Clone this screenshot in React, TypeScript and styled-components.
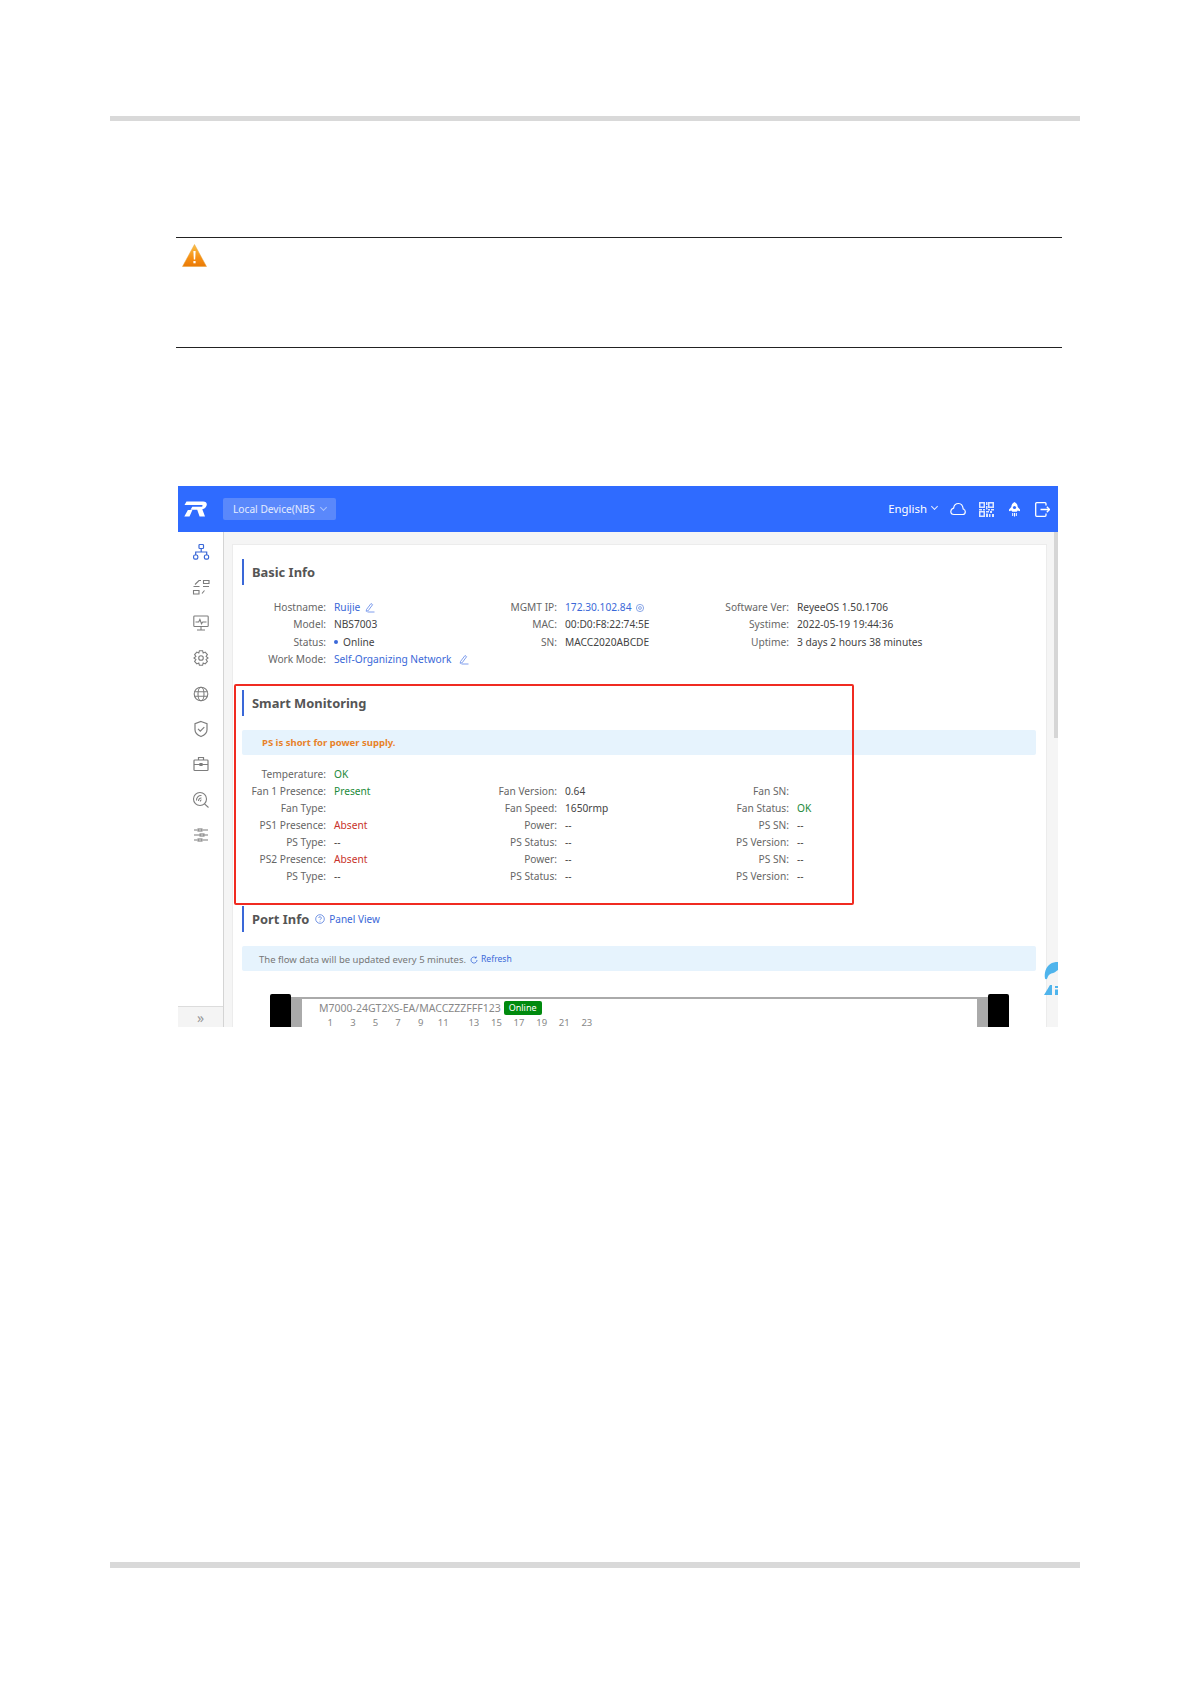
import React from 'react';
import styled, { createGlobalStyle } from 'styled-components';

const GlobalStyle = createGlobalStyle`
  html, body {
    margin: 0;
    padding: 0;
    background: #fff;
  }
  body {
    font-family: "Noto Sans", "Open Sans", Arial, sans-serif;
  }
`;

type Row = {
  label: string;
  value?: React.ReactNode;
};

const NetworkIcon = () => (
  <svg width="18" height="18" viewBox="0 0 18 18" fill="none" stroke="currentColor" strokeWidth="1.2">
    <rect x="7" y="1.5" width="4.5" height="4" rx="0.8" />
    <rect x="1.6" y="12" width="4.2" height="4.2" rx="1.4" />
    <rect x="12.4" y="12" width="4.2" height="4.2" rx="1.4" />
    <path d="M9.2 5.5v3.4M3.7 12V9h11v3" />
  </svg>
);

const FlowIcon = () => (
  <svg width="18" height="18" viewBox="0 0 18 18" fill="none" stroke="currentColor" strokeWidth="1.1">
    <path d="M11.5 2.5h5.500v3h-5.500zM1.500 8.500h6M1.500 12.500h5.500v3.500h-5.500zM11 8.500h6M10 15.500l2.500-3M3 6.500l4-4h2" />
  </svg>
);

const MonitorIcon = () => (
  <svg width="18" height="18" viewBox="0 0 18 18" fill="none" stroke="currentColor" strokeWidth="1.1">
    <rect x="1.8" y="2" width="14.4" height="10.5" rx="0.8" />
    <path d="M3.5 8h3.200l1.200-2.600 1.600 4.400 1.200-1.800h3.800M9 12.500v3M5 16h8" />
  </svg>
);

const GearIcon = () => (
  <svg width="18" height="18" viewBox="0 0 18 18" fill="none" stroke="currentColor" strokeWidth="1.1">
    <path d="M7.400 1.800h3.200l.6 2.200 2-.9 2.200 2.500-1.300 1.900 1.900 1.500-1.900 1.500 1.300 1.900-2.200 2.500-2-.9-.6 2.200H7.400l-.6-2.200-2 .9-2.200-2.500 1.300-1.900L2 9l1.900-1.500-1.300-1.900 2.200-2.500 2 .9z" />
    <circle cx="9" cy="9" r="2.3" />
  </svg>
);

const GlobeIcon = () => (
  <svg width="18" height="18" viewBox="0 0 18 18" fill="none" stroke="currentColor" strokeWidth="1.1">
    <circle cx="9" cy="9" r="6.8" />
    <ellipse cx="9" cy="9" rx="3" ry="6.8" />
    <path d="M2.600 6.700h12.800M2.600 11.300h12.800" />
  </svg>
);

const ShieldIcon = () => (
  <svg width="18" height="18" viewBox="0 0 18 18" fill="none" stroke="currentColor" strokeWidth="1.2">
    <path d="M9 1.500l6 2.200v6c0 3.200-3 5.600-6 6.800-3-1.200-6-3.600-6-6.800v-6z" />
    <path d="M6 8.800l2.300 2.300 4-4" />
  </svg>
);

const CaseIcon = () => (
  <svg width="18" height="18" viewBox="0 0 18 18" fill="none" stroke="currentColor" strokeWidth="1.2">
    <rect x="2" y="5" width="14" height="10.5" rx="0.8" />
    <path d="M6.500 5V2.500h5V5M2 9.500h14" />
    <path d="M8 8.500h2v2H8z" fill="currentColor" />
  </svg>
);

const RadarIcon = () => (
  <svg width="18" height="18" viewBox="0 0 18 18" fill="none" stroke="currentColor" strokeWidth="1.1">
    <circle cx="8" cy="8" r="6.5" />
    <path d="M12.500 12.800l4 3.700M4.500 9.500a4.500 4.500 0 0 1 5-5M6.500 10a2.800 2.800 0 0 1 3-3M8.500 10.500a1 1 0 0 1 1-1.500" />
  </svg>
);

const SlidersIcon = () => (
  <svg width="18" height="18" viewBox="0 0 18 18" fill="none" stroke="currentColor" strokeWidth="1.1">
    <path d="M2 4h3M11 4h5M2 9h5.500M12.500 9H16M2 14h3M11 14h5" />
    <rect x="6" y="3" width="4" height="2" />
    <rect x="8" y="8" width="4" height="2" />
    <rect x="6" y="13" width="4" height="2" />
  </svg>
);

const PenIcon = () => (
  <svg width="11" height="11" viewBox="0 0 11 11" fill="none" stroke="#5f86e8" strokeWidth="0.8">
    <path d="M2.500 7.500L7 1.500l1.600 1.200-4.400 6-2 .6zM3.500 10h7" />
  </svg>
);

const WarningIcon = () => (
  <svg width="25" height="23" viewBox="0 0 25 23">
    <defs>
      <linearGradient id="warn" x1="0" y1="0" x2="0" y2="1">
        <stop offset="0" stopColor="#f9c24b" />
        <stop offset="0.6" stopColor="#f68f12" />
        <stop offset="1" stopColor="#ea7a06" />
      </linearGradient>
    </defs>
    <path d="M12.500 0.500L24.500 22.500H0.500z" fill="url(#warn)" stroke="#e8a33a" strokeWidth="0.5" />
    <path d="M11.400 7h2.200l-.4 8.500h-1.400z" fill="#fff" />
    <rect x="11.400" y="17" width="2.200" height="2.300" fill="#fff" />
  </svg>
);

const Logo = () => (
  <svg width="24" height="16" viewBox="0 0 24 16" fill="#fff">
    <path d="M3.500 0.500H20c3.200 0 4.300 1.800 3.600 4.100-.6 1.900-2.100 3.200-4.300 3.700l2.700 7.200h-5.400l-2.400-6.800H7.500l1.800-3h8.700c1 0 1.500-.4 1.600-1 .1-.5-.3-.8-1-.8H1.500zM4.900 9h4.500L6.500 15.500H1.300z" />
  </svg>
);

const CloudIcon = () => (
  <svg width="16" height="14" viewBox="0 0 16 14" fill="none" stroke="#fff" strokeWidth="1.2">
    <path d="M4 12.500h8.500c1.600 0 2.800-1.200 2.800-2.800 0-1.300-.9-2.400-2.100-2.700C12.800 3.500 11 1.500 8.500 1.500 5.800 1.500 4 3.500 3.600 6.100 2 6.600.8 7.800.8 9.500c0 1.700 1.400 3 3.200 3z" />
  </svg>
);

const QrIcon = () => (
  <svg width="15" height="15" viewBox="0 0 15 15" fill="#dfe8ff">
    <path d="M0 0h6v6H0zM1.500 1.500v3h3v-3zM9 0h6v6H9zM10.500 1.500v3h3v-3zM0 9h6v6H0zM1.500 10.500v3h3v-3zM7 0h1.500v3H7zM7 4h1.500v3.500H7zM0 7h3v1.500H0zM4 7h2v1.500H4zM9 7h2v1.500H9zM12 7h3v1.500h-3zM7 9h3v1.500H7zM11 9h2v2h-2zM7 11.500h2V15H7zM10 12h1.500v3H10zM13 12h2v3h-2z" />
  </svg>
);

const RocketIcon = () => (
  <svg width="13" height="15" viewBox="0 0 13 15" fill="#fff">
    <path d="M6.500 0C8.600 1 9.600 2.800 9.700 4.900l2.300 2.600v1.700l-2.400-.6c-.3.500-.6.900-1 1.200H4.400c-.4-.3-.7-.7-1-1.200L1 9.200V7.500l2.300-2.600C3.400 2.800 4.400 1 6.500 0z" />
    <circle cx="6.500" cy="5.500" r="1.600" fill="#2f6bff" />
    <path d="M4.200 11h1v3h-1zM6 11h1v3.500H6zM7.800 11h1v3h-1z" />
  </svg>
);

const LogoutIcon = () => (
  <svg width="15" height="15" viewBox="0 0 15 15" fill="none" stroke="#fff" strokeWidth="1.3">
    <path d="M11 3.500V1.700a1 1 0 0 0-1-1H1.700a1 1 0 0 0-1 1v11.600a1 1 0 0 0 1 1H10a1 1 0 0 0 1-1v-1.800M5.500 7.500h9M11.800 4.800l2.700 2.700-2.700 2.700" />
  </svg>
);

const Page = styled.div`
  width: 1191px;
  height: 1684px;
  overflow: hidden;
  padding: 116px 111px 0 110px;
  box-sizing: border-box;
  display: flex;
  flex-direction: column;
`;

const Rule = styled.div`
  flex: none;
  height: 5px;
  background: #d9d9d9;
`;

const FootRule = styled(Rule)`
  margin-top: 535px;
  height: 6px;
`;

const Notice = styled.div`
  flex: none;
  margin: 116px 18px 0 66px;
  height: 111px;
  box-sizing: border-box;
  border-top: 1px solid #222;
  border-bottom: 1px solid #222;
  padding: 6px 0 0 6px;
`;

const Shot = styled.div`
  flex: none;
  position: relative;
  margin: 138px 22px 0 68px;
  height: 541px;
  overflow: hidden;
  display: flex;
  flex-direction: column;
  font-size: 10.200px;
  line-height: 17px;
  color: #555;
`;

const TopBar = styled.div`
  flex: none;
  height: 46px;
  background: #2f6bff;
  display: flex;
  align-items: center;
  padding: 0 8px 0 5px;
  color: #fff;
`;

const DeviceSelect = styled.div`
  margin-left: 16px;
  width: 113px;
  height: 22px;
  box-sizing: border-box;
  padding-left: 10px;
  background: #5a88fb;
  border-radius: 2px;
  display: flex;
  align-items: center;
  gap: 4px;
  font-size: 10.200px;
  color: #e4ecff;
`;

const Caret = styled.span<{ $dim?: boolean }>`
  width: 4px;
  height: 4px;
  margin-top: -3px;
  margin-left: 2px;
  border-right: 1px solid ${(p) => (p.$dim ? '#a9c2fd' : '#dfe8ff')};
  border-bottom: 1px solid ${(p) => (p.$dim ? '#a9c2fd' : '#dfe8ff')};
  transform: rotate(45deg);
`;

const TopTools = styled.div`
  margin-left: auto;
  display: flex;
  align-items: center;
  color: #fff;
`;

const Lang = styled.div`
  display: flex;
  align-items: center;
  gap: 3px;
  font-size: 11.400px;
  margin-right: 13px;
  padding-bottom: 2px;
`;

const ToolIcon = styled.span`
  display: flex;
  width: 16px;
  justify-content: center;
  margin-left: 12px;
  &:first-of-type {
    margin-left: 0;
  }
`;

const Body = styled.div`
  flex: 1;
  min-height: 0;
  display: flex;
`;

const Sidebar = styled.div`
  flex: none;
  width: 46px;
  box-sizing: border-box;
  border-right: 1px solid #d4d4d4;
  display: flex;
  flex-direction: column;
  background: #fff;
`;

const NavList = styled.div`
  flex: 1;
  display: flex;
  flex-direction: column;
  align-items: center;
  gap: 17.400px;
  padding-top: 11px;
`;

const NavItem = styled.span<{ $active?: boolean }>`
  display: flex;
  color: ${(p) => (p.$active ? '#3a68d8' : '#7d7d7d')};
`;

const Collapse = styled.div`
  flex: none;
  height: 20px;
  background: #f4f4f4;
  border-top: 1px solid #dcdcdc;
  display: flex;
  align-items: center;
  justify-content: center;
  color: #999;
  font-size: 14px;
`;

const Main = styled.div`
  flex: 1;
  min-width: 0;
  background: #f5f5f5;
  display: flex;
  padding: 12px 11px 0 8px;
  position: relative;
`;

const Card = styled.div`
  flex: 1;
  min-width: 0;
  background: #fff;
  border: 1px solid #ececec;
  border-bottom: 0;
  padding: 14px 10px 0 9px;
`;

const Scroll = styled.div`
  position: absolute;
  top: 0;
  right: 0;
  width: 4px;
  height: 206px;
  background: #d6d6d6;
`;

const Title = styled.div`
  display: flex;
  align-items: center;
  height: 26px;
  border-left: 2px solid #3a68d8;
  padding-left: 8px;
  font-size: 12.900px;
  font-weight: 700;
  color: #555;
`;

const TitleLink = styled.span`
  display: flex;
  align-items: center;
  gap: 4px;
  margin-left: 6px;
  font-size: 10px;
  font-weight: 400;
  color: #3a68d8;
`;

const Grid = styled.div<{ $top: number; $bottom: number }>`
  display: grid;
  grid-template-columns: 231px 232px auto;
  margin-top: ${(p) => p.$top}px;
  margin-bottom: ${(p) => p.$bottom}px;
`;

const Column = styled.div`
  display: flex;
  flex-direction: column;
`;

const Pair = styled.div<{ $height: number }>`
  display: grid;
  grid-template-columns: 84px 1fr;
  column-gap: 8px;
  height: ${(p) => p.$height}px;
  white-space: nowrap;
`;

const Label = styled.span`
  text-align: right;
  color: #666;
`;

const Value = styled.span<{ $color?: string }>`
  display: flex;
  align-items: center;
  gap: 4px;
  color: ${(p) => p.$color || '#444'};
`;

const Dot = styled.i`
  width: 4px;
  height: 4px;
  border-radius: 50%;
  background: #3a68d8;
  margin-right: 1px;
`;

const Band = styled.div`
  height: 25px;
  margin-top: 14px;
  background: #e6f3fd;
  border-radius: 2px;
  display: flex;
  align-items: center;
  padding-left: 17px;
  font-size: 9.500px;
  color: #777;
`;

const FlowNote = styled.span`
  padding-top: 2px;
  display: flex;
  align-items: center;
`;

const OrangeNote = styled.span`
  padding-left: 3px;
  font-weight: 700;
  color: #e8822a;
`;

const RefreshLink = styled.span`
  display: inline-flex;
  align-items: center;
  gap: 3px;
  margin-left: 4px;
  font-size: 8.600px;
  color: #3a68d8;
`;

const Highlight = styled.div`
  position: absolute;
  left: 10px;
  top: 152px;
  width: 620px;
  height: 221px;
  box-sizing: border-box;
  border: 2px solid #f02b21;
  border-radius: 2px;
`;

const Device = styled.div`
  display: grid;
  grid-template-columns: 21px 11px 1fr 11px 21px;
  margin: 23px 27px 0 28px;
  height: 32px;
`;

const Clamp = styled.div`
  background: #000;
  border-radius: 2px 2px 0 0;
`;

const Ear = styled.div`
  background: #aaa;
  margin-top: 3px;
`;

const DevicePanel = styled.div`
  margin-top: 3px;
  border-top: 2px solid #aaa;
  padding: 1px 0 0 17px;
  color: #888;
`;

const DeviceName = styled.div`
  display: flex;
  align-items: center;
  gap: 3px;
  height: 16px;
  font-size: 10.500px;
`;

const Online = styled.span`
  padding: 0 5px;
  height: 14px;
  line-height: 14px;
  background: #008a0e;
  border-radius: 2px;
  color: #fff;
  font-size: 9px;
`;

const PortNumbers = styled.div`
  display: flex;
  margin-top: 2px;
  font-size: 9.500px;
  line-height: 9px;
`;

const PortNumber = styled.span<{ $wide?: boolean }>`
  width: 22.600px;
  text-align: center;
  margin-left: ${(p) => (p.$wide ? '8px' : '0')};
`;

const FloatBadge = styled.div`
  position: absolute;
  right: 0;
  top: 430px;
  width: 14px;
  height: 33px;
  overflow: hidden;
`;

const basicColumns: Row[][] = [
  [
    {
      label: 'Hostname:',
      value: (
        <Value $color="#3a68d8">
          Ruijie <PenIcon />
        </Value>
      ),
    },
    { label: 'Model:', value: 'NBS7003' },
    {
      label: 'Status:',
      value: (
        <>
          <Dot /> Online
        </>
      ),
    },
    {
      label: 'Work Mode:',
      value: (
        <Value $color="#3a68d8">
          Self-Organizing Network&nbsp; <PenIcon />
        </Value>
      ),
    },
  ],
  [
    {
      label: 'MGMT IP:',
      value: (
        <Value $color="#3a68d8">
          172.30.102.84
          <svg width="10" height="10" viewBox="0 0 10 10" fill="none" stroke="#6f90e0" strokeWidth="0.8">
            <circle cx="5" cy="5" r="3.6" />
            <circle cx="5" cy="5" r="1.4" />
          </svg>
        </Value>
      ),
    },
    { label: 'MAC:', value: '00:D0:F8:22:74:5E' },
    { label: 'SN:', value: 'MACC2020ABCDE' },
  ],
  [
    { label: 'Software Ver:', value: 'ReyeeOS 1.50.1706' },
    { label: 'Systime:', value: '2022-05-19 19:44:36' },
    { label: 'Uptime:', value: '3 days 2 hours 38 minutes' },
  ],
];

const GREEN = '#1c8a3a';
const RED = '#c8322a';

const smartColumns: Row[][] = [
  [
    { label: 'Temperature:', value: <Value $color={GREEN}>OK</Value> },
    { label: 'Fan 1 Presence:', value: <Value $color={GREEN}>Present</Value> },
    { label: 'Fan Type:' },
    { label: 'PS1 Presence:', value: <Value $color={RED}>Absent</Value> },
    { label: 'PS Type:', value: '--' },
    { label: 'PS2 Presence:', value: <Value $color={RED}>Absent</Value> },
    { label: 'PS Type:', value: '--' },
  ],
  [
    { label: '' },
    { label: 'Fan Version:', value: '0.64' },
    { label: 'Fan Speed:', value: '1650rmp' },
    { label: 'Power:', value: '--' },
    { label: 'PS Status:', value: '--' },
    { label: 'Power:', value: '--' },
    { label: 'PS Status:', value: '--' },
  ],
  [
    { label: '' },
    { label: 'Fan SN:' },
    { label: 'Fan Status:', value: <Value $color={GREEN}>OK</Value> },
    { label: 'PS SN:', value: '--' },
    { label: 'PS Version:', value: '--' },
    { label: 'PS SN:', value: '--' },
    { label: 'PS Version:', value: '--' },
  ],
];

const ports = [1, 3, 5, 7, 9, 11, 13, 15, 17, 19, 21, 23];

const InfoGrid = ({
  columns,
  top,
  bottom,
  rowHeight,
}: {
  columns: Row[][];
  top: number;
  bottom: number;
  rowHeight: number;
}) => (
  <Grid $top={top} $bottom={bottom}>
    {columns.map((rows, i) => (
      <Column key={i}>
        {rows.map((row, j) => (
          <Pair key={j} $height={rowHeight}>
            <Label>{row.label}</Label>
            <Value>{row.value}</Value>
          </Pair>
        ))}
      </Column>
    ))}
  </Grid>
);

export default function App() {
  return (
    <Page>
      <GlobalStyle />
      <Rule />
      <Notice>
        <WarningIcon />
      </Notice>
      <Shot>
        <TopBar>
          <Logo />
          <DeviceSelect>
            Local Device(NBS <Caret $dim />
          </DeviceSelect>
          <TopTools>
            <Lang>
              English <Caret />
            </Lang>
            <ToolIcon>
              <CloudIcon />
            </ToolIcon>
            <ToolIcon>
              <QrIcon />
            </ToolIcon>
            <ToolIcon>
              <RocketIcon />
            </ToolIcon>
            <ToolIcon>
              <LogoutIcon />
            </ToolIcon>
          </TopTools>
        </TopBar>
        <Body>
          <Sidebar>
            <NavList>
              <NavItem $active>
                <NetworkIcon />
              </NavItem>
              <NavItem>
                <FlowIcon />
              </NavItem>
              <NavItem>
                <MonitorIcon />
              </NavItem>
              <NavItem>
                <GearIcon />
              </NavItem>
              <NavItem>
                <GlobeIcon />
              </NavItem>
              <NavItem>
                <ShieldIcon />
              </NavItem>
              <NavItem>
                <CaseIcon />
              </NavItem>
              <NavItem>
                <RadarIcon />
              </NavItem>
              <NavItem>
                <SlidersIcon />
              </NavItem>
            </NavList>
            <Collapse>»</Collapse>
          </Sidebar>
          <Main>
            <Card>
              <Title>Basic Info</Title>
              <InfoGrid columns={basicColumns} top={14} bottom={22} rowHeight={17.3} />
              <Title>Smart Monitoring</Title>
              <Band>
                <OrangeNote>PS is short for power supply.</OrangeNote>
              </Band>
              <InfoGrid columns={smartColumns} top={11} bottom={21} rowHeight={17} />
              <Title>
                Port Info
                <TitleLink>
                  <svg width="10" height="10" viewBox="0 0 10 10" fill="none" stroke="#3a68d8" strokeWidth="0.7">
                    <circle cx="5" cy="5" r="4.3" />
                    <path d="M3.700 4a1.300 1.300 0 1 1 1.900 1.200c-.4.200-.6.500-.6 1M5 7.200v.6" />
                  </svg>
                  Panel View
                </TitleLink>
              </Title>
              <Band>
                <FlowNote>
                  The flow data will be updated every 5 minutes.
                  <RefreshLink>
                    <svg width="8" height="8" viewBox="0 0 8 8" fill="none" stroke="#3a68d8" strokeWidth="0.8">
                      <path d="M7 4a3 3 0 1 1-1-2.200M6.200 0.500v1.500H4.800" />
                    </svg>
                    Refresh
                  </RefreshLink>
                </FlowNote>
              </Band>
              <Device>
                <Clamp />
                <Ear />
                <DevicePanel>
                  <DeviceName>
                    M7000-24GT2XS-EA/MACCZZZFFF123 <Online>Online</Online>
                  </DeviceName>
                  <PortNumbers>
                    {ports.map((n) => (
                      <PortNumber key={n} $wide={n === 13}>
                        {n}
                      </PortNumber>
                    ))}
                  </PortNumbers>
                </DevicePanel>
                <Ear />
                <Clamp />
              </Device>
            </Card>
            <Scroll />
            <Highlight />
            <FloatBadge>
              <svg width="14" height="33" viewBox="0 0 14 33" fill="#4fb4ec">
                <path d="M14 0C8 0 3.500 2.500 1.500 8.500.7 11 .5 14 1 16.500c.3 1.200 2 1 2.300-.2.500-2.300 2-4.300 4-4.800C10 11 12 9.500 14 8z" />
                <path d="M6 23L0 33h8V23zM11 24h3v2h-3zM11 27.500h3V33h-3z" />
              </svg>
            </FloatBadge>
          </Main>
        </Body>
      </Shot>
      <FootRule />
    </Page>
  );
}
